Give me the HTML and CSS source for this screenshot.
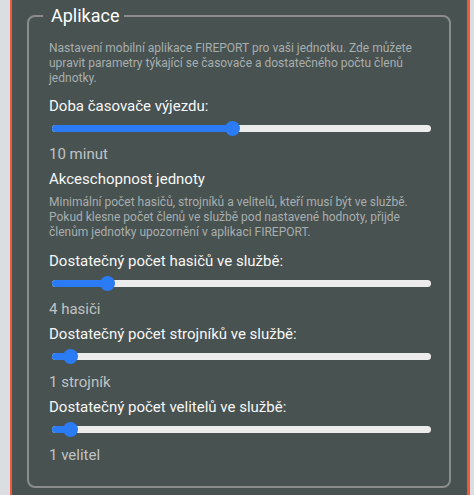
FILE: index.html
```html
<!DOCTYPE html>
<html lang="cs">
<head>
<meta charset="utf-8">
<title>Aplikace</title>
<link rel="stylesheet" href="styles.css">
</head>
<body>
<div class="page">
  <div class="panel">
    <fieldset class="group">
      <legend class="group-title">Aplikace</legend>
      <p class="desc">Nastavení mobilní aplikace FIREPORT pro vaši jednotku. Zde můžete upravit parametry týkající se časovače a dostatečného počtu členů jednotky.</p>

      <div class="setting first">
        <div class="label">Doba časovače výjezdu:</div>
        <div class="slider"><div class="track"><div class="fill" style="width:47.6%"></div><div class="thumb" style="left:47.6%"></div></div></div>
        <div class="value">10 minut</div>
      </div>

      <div class="heading">Akceschopnost jednoty</div>
      <p class="desc desc2">Minimální počet hasičů, strojníků a velitelů, kteří musí být ve službě. Pokud klesne počet členů ve službě pod nastavené hodnoty, přijde členům jednotky upozornění v aplikaci FIREPORT.</p>

      <div class="setting after-desc">
        <div class="label">Dostatečný počet hasičů ve službě:</div>
        <div class="slider"><div class="track"><div class="fill" style="width:14.6%"></div><div class="thumb" style="left:14.6%"></div></div></div>
        <div class="value">4 hasiči</div>
      </div>

      <div class="setting">
        <div class="label">Dostatečný počet strojníků ve službě:</div>
        <div class="slider"><div class="track"><div class="fill" style="width:4.9%"></div><div class="thumb" style="left:4.9%"></div></div></div>
        <div class="value">1 strojník</div>
      </div>

      <div class="setting">
        <div class="label">Dostatečný počet velitelů ve službě:</div>
        <div class="slider"><div class="track"><div class="fill" style="width:4.9%"></div><div class="thumb" style="left:4.9%"></div></div></div>
        <div class="value">1 velitel</div>
      </div>
    </fieldset>
  </div>
</div>
</body>
</html>
```

FILE: styles.css
```css
html, body {
  margin: 0;
  padding: 0;
  height: 100%;
}

body {
  background: #dcdde0;
  font-family: Roboto, "Liberation Sans", sans-serif;
}

.page {
  height: 100%;
  padding: 0 4px 0 10px;
  box-sizing: border-box;
}

.panel {
  height: 100%;
  box-sizing: border-box;
  background: #475251;
  border-left: 2px solid #f2593b;
  border-right: 3px solid #f2593b;
  padding-top: 5px;
  overflow: hidden;
}

.group {
  margin: 0 16px 0 15px;
  padding: 15px 18px 22px 20px;
  border: 2px solid #8b8d8c;
  border-radius: 8px;
  min-inline-size: 0;
}

.group-title {
  font-size: 18px;
  color: #ffffff;
  margin-left: -6px;
  padding: 0 5px 0 8px;
}

.desc {
  margin: 0;
  font-size: 12px;
  line-height: 15px;
  color: #a9aeae;
}

.setting {
  margin-top: 7px;
}

.setting.first {
  margin-top: 11px;
}

.setting.after-desc {
  margin-top: 12px;
}

.label,
.heading {
  font-size: 15px;
  line-height: 18px;
  color: #f7f7f7;
}

.heading {
  margin-top: 7px;
}

.desc2 {
  margin-top: 7px;
}

.slider {
  height: 27px;
  display: flex;
  align-items: center;
  padding-left: 3px;
}

.track {
  position: relative;
  flex: 1;
  height: 7px;
  border-radius: 4px;
  background: #ececec;
}

.fill {
  height: 100%;
  border-radius: 4px 0 0 4px;
  background: #2b7bf5;
}

.thumb {
  position: absolute;
  top: 50%;
  width: 15px;
  height: 15px;
  margin: -7.5px 0 0 -7.5px;
  border-radius: 50%;
  background: #2b7bf5;
}

.value {
  margin-top: 3px;
  font-size: 15px;
  line-height: 18px;
  color: #c0c3c3;
}
```
